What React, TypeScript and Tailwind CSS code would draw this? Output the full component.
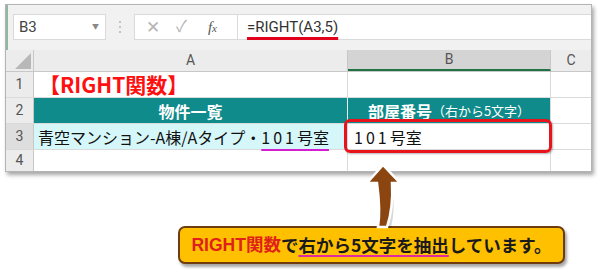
const ui = "font-['Roboto','Noto_Sans_CJK_JP',sans-serif]";
const jp = "font-['Noto_Sans_CJK_JP',sans-serif]";

function Corner() {
  return (
    <svg width="28" height="22" viewBox="0 0 28 22">
      <polygon points="9,19 25,19 25,3" fill="#b8b8b8" />
    </svg>
  );
}

function Arrow() {
  return (
    <svg
      className="absolute left-[360px] top-[160px]"
      width="50"
      height="70"
      viewBox="0 0 50 70"
    >
      <path
        d="M25 8 C33 40 31 55 28 68 L20 68 C22 55 21 40 25 8 Z"
        fill="#000"
        opacity="0.15"
        transform="translate(3 0)"
      />
      <path
        d="M23 5 L40 23 L32 23 C33 40 31 55 27 67 L18 67 C20 55 19 38 17 23 L7 23 Z"
        fill="#8a4510"
        stroke="#fff"
        strokeWidth="2.5"
        strokeLinejoin="miter"
      />
    </svg>
  );
}

export default function App() {
  return (
    <div className={`relative w-[600px] h-[276px] overflow-hidden bg-white ${ui}`}>
      {/* sheet window */}
      <div className="ml-[5px] mt-[4px] w-[587px] border border-[#b4b4b4] bg-white shadow-[2px_3px_4px_rgba(0,0,0,0.35)]">
        {/* formula bar */}
        <div className="flex items-start h-[45px] bg-[#f1f1f1] pt-[9px] pl-[5px] border-l-2 border-l-[#8fb89e]">
          <div className="flex items-center justify-between w-[93px] h-[26px] bg-white border border-[#dadada] pl-[5px] pr-[6px] text-[15px] text-[#444]">
            <span>B3</span>
            <span className="text-[7px] text-[#888]">▼</span>
          </div>
          <div className="flex flex-col justify-center gap-[3px] w-[3px] h-[26px] ml-[13px] mr-[12px]">
            <span className="w-[2px] h-[2px] bg-[#c4c4c4]" />
            <span className="w-[2px] h-[2px] bg-[#c4c4c4]" />
            <span className="w-[2px] h-[2px] bg-[#c4c4c4]" />
          </div>
          <div className="flex items-center w-[104px] h-[26px] bg-white border border-[#dadada] text-[#b5b5b5]">
            <span className="ml-[11px] text-[17px] leading-none">✕</span>
            <span className="ml-[16px] text-[16px] leading-none">✓</span>
            <span className="ml-[21px] text-[15px] italic text-[#555] font-['Liberation_Serif',serif]">
              f<span className="text-[11px]">x</span>
            </span>
          </div>
          <div className="flex-1 flex items-center h-[26px] bg-white border-y border-[#dadada] pl-[9px] text-[15px] text-[#333]">
            <span className="underline decoration-[#e3001b] decoration-[3px] underline-offset-[5px]">
              =RIGHT(A3,5)
            </span>
          </div>
        </div>

        {/* column headers */}
        <div className="flex h-[22px] bg-[#ececec] text-[14px] text-[#555] border-b border-[#c8c8c8]">
          <div className="w-[28px] border-r border-[#c8c8c8]">
            <Corner />
          </div>
          <div className="w-[314px] flex items-center justify-center border-r border-[#c8c8c8]">A</div>
          <div className="w-[203px] flex items-center justify-center bg-[#d4d4d4] border-r border-[#c8c8c8] border-b-2 border-b-[#217346]">B</div>
          <div className="flex-1 flex items-center justify-center">C</div>
        </div>

        {/* row 1 */}
        <div className="flex h-[26px] border-b border-[#dadada]">
          <div className="w-[28px] flex items-center justify-center bg-[#ececec] border-r border-[#c8c8c8] text-[14px] text-[#555]">1</div>
          <div className={`w-[314px] flex items-center pl-[5px] border-r border-[#dadada] text-[21px] font-bold text-[#ff1010] ${jp}`}>
            【RIGHT関数】
          </div>
          <div className="w-[203px] border-r border-[#dadada]" />
          <div className="flex-1" />
        </div>

        {/* row 2 */}
        <div className="flex h-[26px] border-b border-[#dadada]">
          <div className="w-[28px] flex items-center justify-center bg-[#ececec] border-r border-[#c8c8c8] text-[14px] text-[#555]">2</div>
          <div className={`w-[314px] flex items-center justify-center bg-[#108b8c] border-r border-[#e8f4f4] text-[16px] font-bold text-white ${jp}`}>
            物件一覧
          </div>
          <div className={`w-[203px] flex items-center justify-center bg-[#108b8c] border-r border-[#dadada] text-white ${jp}`}>
            <span className="text-[16px] font-bold">部屋番号</span>
            <span className="text-[13px]">（右から5文字）</span>
          </div>
          <div className="flex-1" />
        </div>

        {/* row 3 */}
        <div className="flex h-[26px] border-b border-[#dadada]">
          <div className="w-[28px] flex items-center justify-center bg-[#dedede] border-r border-[#c8c8c8] text-[14px] text-[#555]">3</div>
          <div className={`w-[314px] flex items-center pl-[4px] bg-[#d6f7fa] border-r border-[#dadada] text-[16px] text-[#111] ${jp}`}>
            青空マンション-A棟/Aタイプ・
            <span className="underline decoration-[#d21fd2] decoration-2 underline-offset-[5px]">
              <span className="tracking-[3px]">101</span>号室
            </span>
          </div>
          <div className={`relative w-[203px] flex items-center pl-[6px] border-r border-[#dadada] text-[16px] text-[#111] ${jp}`}>
            <span className="tracking-[3px]">101</span>号室
            <div className="absolute -left-[4px] -top-[5px] -right-[2px] -bottom-[4px] rounded-[6px] border-[3px] border-[#e8131b] shadow-[1px_1px_2px_rgba(0,0,0,0.3)]" />
          </div>
          <div className="flex-1" />
        </div>

        {/* row 4 */}
        <div className="flex h-[21px]">
          <div className="w-[28px] flex items-center justify-center bg-[#ececec] border-r border-[#c8c8c8] text-[14px] text-[#555]">4</div>
          <div className="w-[314px] border-r border-[#dadada]" />
          <div className="w-[203px] border-r border-[#dadada]" />
          <div className="flex-1" />
        </div>
      </div>

      <Arrow />

      {/* callout */}
      <div className={`ml-[178px] mt-[54px] w-[387px] h-[38px] flex items-center justify-center rounded-[7px] border-2 border-[#6e3c0e] bg-[#ffc000] shadow-[2px_3px_3px_rgba(0,0,0,0.35)] text-[17.5px] font-bold text-[#1a1a1a] ${jp}`}>
        <span className="text-[#e0201a] font-['Liberation_Sans','Noto_Sans_CJK_JP',sans-serif]">RIGHT関数</span>
        <span>で</span>
        <span className="underline decoration-[#e02aa0] decoration-[1.5px] underline-offset-[3px]">右から5文字を抽出</span>
        <span>しています。</span>
      </div>
    </div>
  );
}
